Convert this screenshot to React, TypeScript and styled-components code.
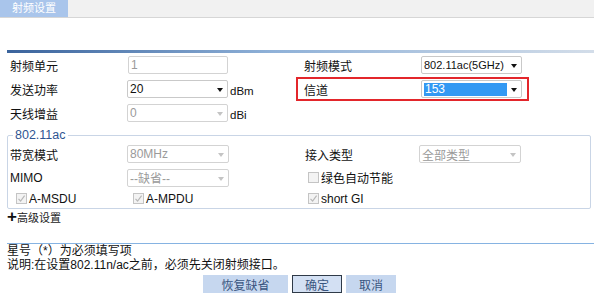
import styled, { createGlobalStyle } from "styled-components";

const GlobalStyle = createGlobalStyle`
  html, body {
    margin: 0;
    padding: 0;
    background: #ffffff;
  }
  body {
    width: 594px;
    height: 299px;
    overflow: hidden;
    font-family: "Liberation Sans", Arial, "Noto Sans CJK SC", sans-serif;
    font-size: 12px;
    color: #111;
  }
`;

/* ================= TOP TAB ================= */
const TabBar = styled.div`
  height: 17px;
  background: #f1f1f1;
  border-bottom: 1px solid #d6d6d6;
  display: flex;
`;

const Tab = styled.div`
  width: 56px;
  padding-left: 12px;
  background: #a9c5eb;
  color: #ffffff;
  font-size: 11px;
  line-height: 17px;
`;

/* ================= CONTENT ================= */
const Content = styled.div`
  margin-left: 7px;
  width: 587px;
`;

const HeadLine = styled.div`
  margin-top: 32px;
  height: 3px;
  background: linear-gradient(to right, #3a639c, #8fb1d8 45%, #d3dde9);
`;

const Row = styled.div<{ $h?: number }>`
  display: flex;
  align-items: center;
  height: ${(p) => p.$h ?? 24}px;
`;

const LeftCell = styled.div<{ $w: number; $pad: number }>`
  width: ${(p) => p.$w}px;
  padding-left: ${(p) => p.$pad}px;
  display: flex;
  align-items: center;
  box-sizing: border-box;
`;

const RightCell = styled.div<{ $mark?: boolean; $pad: number }>`
  width: 233px;
  height: 24px;
  box-sizing: border-box;
  border: 2px solid ${(p) => (p.$mark ? "#e3262b" : "transparent")};
  padding-left: ${(p) => p.$pad}px;
  display: flex;
  align-items: center;
`;

const Label = styled.span<{ $w: number }>`
  width: ${(p) => p.$w}px;
  flex-shrink: 0;
  color: #111;
`;

const Box = styled.div<{ $disabled?: boolean; $w?: number; $fs?: number }>`
  position: relative;
  width: ${(p) => p.$w ?? 101}px;
  height: 18px;
  box-sizing: border-box;
  border: 1px solid ${(p) => (p.$disabled ? "#d3d3d3" : "#c9c9c9")};
  border-radius: 2px;
  background: #fff;
  color: ${(p) => (p.$disabled ? "#9a9a9a" : "#111")};
  padding-left: 2px;
  display: flex;
  align-items: center;
  font-size: ${(p) => p.$fs ?? 12}px;
  white-space: nowrap;
  overflow: hidden;
`;

const Selected = styled.span`
  background: #3399f3;
  color: #fff;
  width: 82px;
  line-height: 13px;
  padding-left: 1px;
`;

const Arrow = styled.span<{ $disabled?: boolean }>`
  position: absolute;
  right: 4px;
  top: 7px;
  width: 0;
  height: 0;
  border-left: 3.5px solid transparent;
  border-right: 3.5px solid transparent;
  border-top: 4px solid ${(p) => (p.$disabled ? "#c4c4c4" : "#111")};
`;

const Unit = styled.span`
  margin-left: 2px;
  margin-top: 3px;
  font-size: 11.5px;
`;

/* ================= FIELDSET ================= */
const Group = styled.fieldset`
  margin: 3px 3px 0 0;
  padding: 0;
  border: 1px solid #c9d5e6;
  border-radius: 2px;
`;

const Legend = styled.legend`
  margin-left: 5px;
  padding: 0 2px;
  color: #2f5592;
  font-size: 12.5px;
  line-height: 14px;
`;

const Check = styled.span`
  display: inline-flex;
  align-items: center;
  margin-right: 2px;
  width: 11px;
  height: 11px;
  box-sizing: border-box;
  border: 1px solid #c4c4c4;
  background: #f3f3f3;
  flex-shrink: 0;
`;

const CheckItem = styled.span<{ $w?: number }>`
  display: inline-flex;
  align-items: center;
  width: ${(p) => (p.$w ? `${p.$w}px` : "auto")};
`;

function CheckBox({ checked }: { checked?: boolean }) {
  return (
    <Check>
      {checked && (
        <svg width="9" height="9" viewBox="0 0 9 9">
          <path d="M1.5 4.8 L3.6 7 L7.6 1.6" fill="none" stroke="#b8b8b8" strokeWidth="1.2" />
        </svg>
      )}
    </Check>
  );
}

/* ================= FOOTER ================= */
const Advanced = styled.div`
  margin-top: 1px;
  display: flex;
  align-items: center;
  height: 14px;
  color: #222;
  font-size: 11px;
`;

const Plus = styled.span`
  font-size: 17px;
  font-weight: 700;
  line-height: 14px;
  color: #111;
`;

const FootLine = styled.div`
  margin-top: 19px;
  height: 1px;
  background: #86b3e2;
`;

const Note = styled.div`
  line-height: 14px;
  color: #111;
  white-space: nowrap;
`;

const Buttons = styled.div`
  margin-top: 3px;
  display: flex;
  justify-content: center;
  padding-right: 2px;
  gap: 4px;
`;

const Button = styled.button<{ $w: number; $active?: boolean }>`
  width: ${(p) => p.$w}px;
  height: 18px;
  box-sizing: border-box;
  border: 1px solid ${(p) => (p.$active ? "#2f3a48" : "#c6d7ef")};
  background: ${(p) => (p.$active ? "#d3e0f3" : "#c6d7ef")};
  color: #39557f;
  font-family: inherit;
  font-size: 12px;
  padding: 0;
`;

export default function App() {
  return (
    <>
      <GlobalStyle />
      <TabBar>
        <Tab>射频设置</Tab>
      </TabBar>
      <Content>
        <HeadLine />
        <Row>
          <LeftCell $w={289} $pad={3}>
            <Label $w={118}>射频单元</Label>
            <Box $disabled $w={100}>1</Box>
          </LeftCell>
          <RightCell $pad={6}>
            <Label $w={117}>射频模式</Label>
            <Box $fs={11}>
              802.11ac(5GHz)
              <Arrow />
            </Box>
          </RightCell>
        </Row>
        <Row>
          <LeftCell $w={289} $pad={3}>
            <Label $w={117}>发送功率</Label>
            <Box>
              20
              <Arrow />
            </Box>
            <Unit>dBm</Unit>
          </LeftCell>
          <RightCell $mark $pad={6}>
            <Label $w={117}>信道</Label>
            <Box>
              <Selected>153</Selected>
              <Arrow />
            </Box>
          </RightCell>
        </Row>
        <Row>
          <LeftCell $w={289} $pad={3}>
            <Label $w={117}>天线增益</Label>
            <Box $disabled>
              0
              <Arrow $disabled />
            </Box>
            <Unit>dBi</Unit>
          </LeftCell>
        </Row>

        <Group>
          <Legend>802.11ac</Legend>
          <Row>
            <LeftCell $w={288} $pad={2}>
              <Label $w={117}>带宽模式</Label>
              <Box $disabled $w={102}>
                80MHz
                <Arrow $disabled />
              </Box>
            </LeftCell>
            <LeftCell $w={230} $pad={9}>
              <Label $w={114}>接入类型</Label>
              <Box $disabled $w={102}>
                全部类型
                <Arrow $disabled />
              </Box>
            </LeftCell>
          </Row>
          <Row $h={23}>
            <LeftCell $w={288} $pad={2}>
              <Label $w={117}>MIMO</Label>
              <Box $disabled $w={102}>
                --缺省--
                <Arrow $disabled />
              </Box>
            </LeftCell>
            <LeftCell $w={230} $pad={12}>
              <CheckItem>
                <CheckBox />
                绿色自动节能
              </CheckItem>
            </LeftCell>
          </Row>
          <Row $h={19}>
            <LeftCell $w={288} $pad={8}>
              <CheckItem $w={117}>
                <CheckBox checked />
                A-MSDU
              </CheckItem>
              <CheckItem>
                <CheckBox checked />
                A-MPDU
              </CheckItem>
            </LeftCell>
            <LeftCell $w={230} $pad={12}>
              <CheckItem>
                <CheckBox checked />
                short GI
              </CheckItem>
            </LeftCell>
          </Row>
        </Group>

        <Advanced>
          <Plus>+</Plus>高级设置
        </Advanced>
        <FootLine />
        <Note>星号（*）为必须填写项</Note>
        <Note>说明:在设置802.11n/ac之前，必须先关闭射频接口。</Note>
        <Buttons>
          <Button $w={85}>恢复缺省</Button>
          <Button $w={50} $active>确定</Button>
          <Button $w={50}>取消</Button>
        </Buttons>
      </Content>
    </>
  );
}
